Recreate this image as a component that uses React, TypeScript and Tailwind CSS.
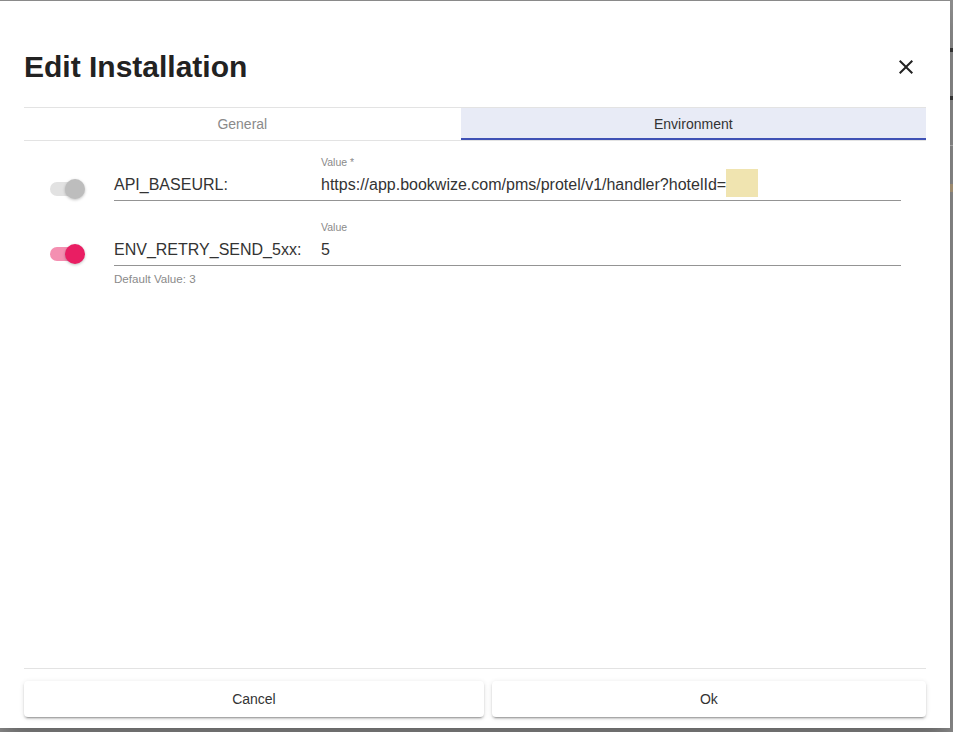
import React from 'react';

type EnvVar = {
  name: string;
  label: string;
  value: string;
  enabled: boolean;
  redacted?: boolean;
  helper?: string;
};

const ENV_VARS: EnvVar[] = [
  {
    name: 'API_BASEURL:',
    label: 'Value *',
    value: 'https://app.bookwize.com/pms/protel/v1/handler?hotelId=',
    enabled: false,
    redacted: true
  },
  {
    name: 'ENV_RETRY_SEND_5xx:',
    label: 'Value',
    value: '5',
    enabled: true,
    helper: 'Default Value: 3'
  }
];

// Small switch: thumb sits on the right in both states, only the colours change.
const Toggle: React.FC<{ on: boolean }> = ({ on }) => (
  <div className="relative w-9 h-5 flex items-center">
    <div className={`ml-px w-[34px] h-[14px] rounded-full ${on ? 'bg-[#f48fb1]' : 'bg-[#e2e2e2]'}`} />
    <div
      className={`absolute right-0 top-0 w-5 h-5 rounded-full shadow-[0_1px_3px_rgba(0,0,0,0.25)] ${on ? 'bg-[#e91e63]' : 'bg-[#bdbdbd]'}`}
    />
  </div>
);

const EnvRow: React.FC<{ item: EnvVar }> = ({ item }) => (
  <div className="flex items-start">
    <div className="ml-[25px] w-9 mt-[25px] shrink-0">
      <Toggle on={item.enabled} />
    </div>
    <div className="ml-[29px] mr-[25px] flex-1">
      <div className="flex">
        <div className="w-[207px] shrink-0" />
        <div className="h-4 leading-4 text-[10.5px] text-[#8a8a8a] mb-[3px]">{item.label}</div>
      </div>
      <div className="flex items-center h-7 pb-1 border-b border-[#949494] text-base text-[#333]">
        <span className="w-[207px] shrink-0 leading-6">{item.name}</span>
        <span className="leading-6 whitespace-nowrap">{item.value}</span>
        {item.redacted && <span className="-mt-[3px] w-8 h-7 bg-[#f0e4b0]" />}
      </div>
      {item.helper && (
        <div className="mt-[5px] h-4 leading-4 text-[11.6px] text-[#8a8a8a]">{item.helper}</div>
      )}
    </div>
  </div>
);

export default function App() {
  const tabs = ['General', 'Environment'];
  const activeTab = 'Environment';

  return (
    <div className="w-[953px] h-[732px] overflow-hidden bg-[#8d8d8d] flex font-['Liberation_Sans',Arial,sans-serif]">
      <div className="mt-px w-[950px] h-[727px] shrink-0 bg-white flex flex-col shadow-[0_11px_15px_-7px_rgba(0,0,0,0.2),0_24px_38px_3px_rgba(0,0,0,0.14)]">
        <div className="pt-[51px] px-6 flex items-center justify-between">
          <h1 className="text-[30px] leading-[30px] font-bold text-[#222]">Edit Installation</h1>
          <button className="mr-2 w-6 h-6 text-[#222]" aria-label="Close">
            <svg viewBox="0 0 24 24" className="w-6 h-6" fill="currentColor">
              <path d="M19 6.41L17.59 5 12 10.59 6.41 5 5 6.41 10.59 12 5 17.59 6.41 19 12 13.41 17.59 19 19 17.59 13.41 12z" />
            </svg>
          </button>
        </div>

        <div className="mx-6 mt-[25px] flex border-t border-b border-[#e3e3e3]">
          {tabs.map(tab => {
            const active = tab === activeTab;
            return (
              <div
                key={tab}
                className={`grow h-8 pt-[2px] flex items-center justify-center text-sm border-b-2 ${
                  active ? 'bg-[#e8ebf6] border-[#3f51b5] text-[#333]' : 'border-transparent text-[#8a8a8a]'
                }`}
              >
                {tab}
              </div>
            );
          })}
        </div>

        <div className="px-6 pt-[13px] flex flex-col gap-[18px] flex-1">
          {ENV_VARS.map(v => (
            <EnvRow key={v.name} item={v} />
          ))}
        </div>

        <div className="mx-6 border-t border-[#e3e3e3] pt-3 pb-[11px] flex gap-2">
          {['Cancel', 'Ok'].map(label => (
            <button
              key={label}
              className="grow h-9 rounded bg-white text-sm text-[#333] shadow-[0_3px_1px_-2px_rgba(0,0,0,0.2),0_2px_2px_0_rgba(0,0,0,0.14),0_1px_5px_0_rgba(0,0,0,0.12)]"
            >
              {label}
            </button>
          ))}
        </div>
      </div>

      {/* sliver of the page behind the dialog */}
      <div className="flex-1 pt-[2px] flex flex-col">
        {[0, 1, 2].map(i => (
          <div key={i} className="h-12 border-b border-[#a3a3a3] flex items-center">
            {i < 2 && <div className="mt-12 w-[3px] h-[4px] bg-[#333]" />}
          </div>
        ))}
        <div className="mt-[38px] w-[3px] h-[8px] bg-[#9c8a6e]" />
      </div>
    </div>
  );
}
